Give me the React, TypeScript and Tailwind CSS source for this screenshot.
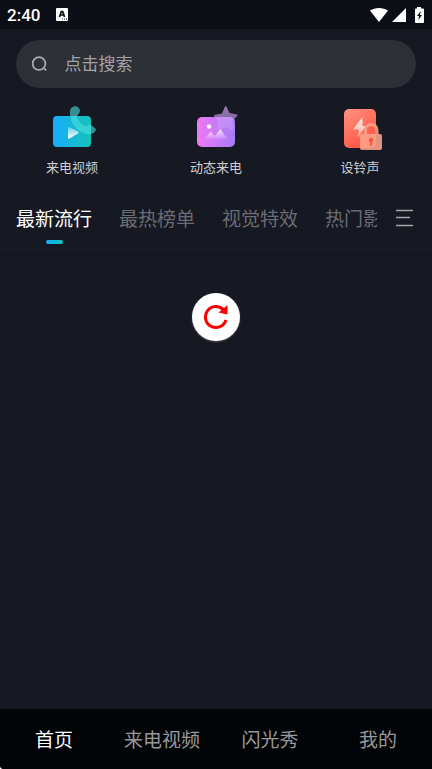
import React, { useState } from "react";

const font = "font-['Roboto','Noto_Sans_CJK_SC',sans-serif]";

function StatusBar() {
  return (
    <header className="flex h-[29px] items-center justify-between bg-[#0b0e15] px-[7px] text-white">
      <div className="flex items-center gap-4">
        <span className="text-[17px] leading-5 font-medium">2:40</span>
        <svg width="12" height="13" viewBox="0 0 12 13" aria-hidden="true">
          <rect width="12" height="13" rx="1" fill="#fff" />
          <path d="M3.500 9 5.300 3.500H6.700L8.500 9M4.500 7H7.500" fill="none" stroke="#0b0e15" strokeWidth="1.700" />
          <path d="M6 11H11" stroke="#0b0e15" strokeWidth="1" strokeDasharray="1 1" />
        </svg>
      </div>
      <div className="flex items-center gap-1">
        <svg width="18" height="16" viewBox="0 0 18 16" aria-hidden="true">
          <path d="M0 3.600C5.200 0 12.800 0 18 3.600L9 15Z" fill="#fff" />
        </svg>
        <svg width="14" height="16" viewBox="0 0 14 16" aria-hidden="true">
          <path d="M14 1V15H0Z" fill="#fff" />
        </svg>
        <svg className="ml-1" width="11" height="16" viewBox="0 0 11 16" aria-hidden="true">
          <path d="M3 0H7V1.500H9Q10 1.500 10 2.500V15Q10 16 9 16H2Q1 16 1 15V2.500Q1 1.500 2 1.500H3Z" fill="#fff" />
          <path d="M6.700 4 3 9H5L4.400 13 8 8H6Z" fill="#0b0e15" />
        </svg>
      </div>
    </header>
  );
}

function VideoIcon() {
  return (
    <svg width="48" height="48" viewBox="0 0 48 48" aria-hidden="true">
      <defs>
        <linearGradient id="video" x1="0" x2="1">
          <stop stopColor="#18adfc" />
          <stop offset="1" stopColor="#15c3b8" />
        </linearGradient>
        <linearGradient id="play" x1="0" x2="0" y1="1" y2="0">
          <stop stopColor="#fff" />
          <stop offset="1" stopColor="#fff" stopOpacity=".35" />
        </linearGradient>
      </defs>
      <rect x="5" y="12" width="38" height="31" rx="4" fill="url(#video)" />
      <path
        d="M26 2.500C29 1.500 32 4 32 7C32 9 29 11 29 13C30 17 33 20 37 22C39 22 41 20 43 21L47.500 24.500C49 27 45 30 42 30C32 30 22.500 22 22 9C22 5 23 3 26 2.500Z"
        fill="#4be0de"
        fillOpacity=".6"
      />
      <path d="M20 24Q20 22.500 21.500 23.200L30 27.500Q31.500 28.500 30 29.500L21.500 34.500Q20 35 20 33.500Z" fill="url(#play)" />
    </svg>
  );
}

function PictureIcon() {
  return (
    <svg width="48" height="48" viewBox="0 0 48 48" aria-hidden="true">
      <defs>
        <linearGradient id="picture" x1="0" x2="1">
          <stop stopColor="#ee79f4" />
          <stop offset="1" stopColor="#a67bf8" />
        </linearGradient>
        <linearGradient id="hills" x1="0" x2="0" y1="0" y2="1">
          <stop stopColor="#fff" stopOpacity=".85" />
          <stop offset="1" stopColor="#fff" stopOpacity=".1" />
        </linearGradient>
        <linearGradient id="star" x1="0" x2="0" y1="0" y2="1">
          <stop stopColor="#cda2f2" stopOpacity=".7" />
          <stop offset="1" stopColor="#c99af8" stopOpacity=".5" />
        </linearGradient>
      </defs>
      <rect x="5" y="13" width="38" height="30" rx="5" fill="url(#picture)" />
      <path
        d="M33 2.500Q33.700 1.500 34.400 2.500L37.500 9 45 10.500Q46.200 11 45.200 12L40.500 17 41.300 25.500Q41.300 27 40 26.300L33.500 23 26.500 26Q25 26.500 25.300 25L26.500 17.500 22.200 12.500Q21.500 11 23 10.800L30 9.500Z"
        fill="url(#star)"
      />
      <circle cx="17" cy="22.500" r="2.200" fill="#fff" fillOpacity=".9" />
      <path d="M13 35 18.500 27.500 22.500 32 28.500 25 35 35Z" fill="url(#hills)" />
    </svg>
  );
}

function LockIcon() {
  return (
    <svg width="48" height="48" viewBox="0 0 48 48" aria-hidden="true">
      <defs>
        <linearGradient id="ring" x1="0" x2=".6" y1="0" y2="1">
          <stop stopColor="#ff9482" />
          <stop offset="1" stopColor="#ff533f" />
        </linearGradient>
        <linearGradient id="bolt" x1="0" x2="0" y1="1" y2="0">
          <stop stopColor="#fff" stopOpacity=".4" />
          <stop offset="1" stopColor="#fff" stopOpacity=".9" />
        </linearGradient>
      </defs>
      <rect x="8" y="5" width="32" height="39" rx="5" fill="url(#ring)" />
      <path d="M26.500 13 17 25.500H23L21.500 34 30 22H26.500Z" fill="url(#bolt)" />
      <g opacity=".88">
        <path d="M29.500 31V26C29.500 18.500 41 18.500 41 26V31" fill="none" stroke="#fda58a" strokeWidth="3" />
        <rect x="24" y="30" width="22" height="16" rx="2" fill="#fda58a" />
      </g>
      <circle cx="35" cy="36" r="2.200" fill="#fa563b" />
      <path d="M35 36V41" stroke="#fa563b" strokeWidth="2" strokeLinecap="round" />
    </svg>
  );
}

const shortcuts = [
  { label: "来电视频", Icon: VideoIcon },
  { label: "动态来电", Icon: PictureIcon },
  { label: "设铃声", Icon: LockIcon },
];
const tabs = ["最新流行", "最热榜单", "视觉特效", "热门影视"];
const pages = ["首页", "来电视频", "闪光秀", "我的"];

export default function App() {
  const [tab, setTab] = useState(0);
  const [page, setPage] = useState(0);

  return (
    <div className="bg-white">
      <div className={`flex min-h-screen flex-col overflow-hidden rounded-bl-[4px] bg-[#161822] ${font}`}>
        <StatusBar />

        <form className="px-4 pt-[11px]" onSubmit={(e) => e.preventDefault()}>
          <label className="flex h-12 items-center gap-4 rounded-full bg-[#2e3038] px-4">
            <svg width="18" height="18" viewBox="0 0 18 18" fill="none" stroke="#a9aaae" strokeWidth="2" aria-hidden="true">
              <circle cx="7.700" cy="8.500" r="7" />
              <path d="M12.500 13 15.500 16" />
            </svg>
            <input
              type="search"
              aria-label="搜索"
              placeholder="点击搜索"
              className="w-full min-w-0 bg-transparent text-[17px] leading-6 text-white outline-none placeholder:text-[#a1a2a6]"
            />
          </label>
        </form>

        <section className="grid grid-cols-3 pt-4">
          {shortcuts.map(({ label, Icon }) => (
            <button key={label} type="button" className="flex flex-col items-center gap-1.5">
              <Icon />
              <span className="text-[13px] leading-5 text-[#cfcfd2]">{label}</span>
            </button>
          ))}
        </section>

        <div className="mt-7 flex items-start border-b border-[#12141c] pb-2.5 pl-4 pr-[18px]">
          <div role="tablist" className="flex min-w-0 flex-1 gap-[27px] overflow-hidden">
            {tabs.map((name, i) => (
              <button
                key={name}
                type="button"
                role="tab"
                aria-selected={tab === i}
                onClick={() => setTab(i)}
                className={`flex shrink-0 flex-col items-center gap-1.5 text-[19px] leading-7 ${tab === i ? "text-white" : "text-[#6b6c73]"}`}
              >
                {name}
                <span className={`h-1 w-[17px] rounded-full ${tab === i ? "bg-linear-to-r from-[#18adfc] to-[#15c3b8]" : ""}`} />
              </button>
            ))}
          </div>
          <button type="button" aria-label="全部分类" className="ml-[19px] flex h-6 items-center">
            <svg width="18" height="18" viewBox="0 0 18 18" stroke="#a5a6aa" strokeWidth="1.600" aria-hidden="true">
              <path d="M0 1.500H17M0 8.500H14M0 16.500H17" />
            </svg>
          </button>
        </div>

        <main className="flex flex-1 flex-col items-center pt-[38px]">
          <button
            type="button"
            aria-label="刷新"
            className="flex size-12 items-center justify-center rounded-full bg-white shadow-[0_1px_2px_#4b514c]"
          >
            <svg width="26" height="26" viewBox="0 0 26 26" aria-hidden="true">
              <path d="M23 16A10.500 10.500 0 1 1 20.400 5.600" fill="none" stroke="#fb0000" strokeWidth="3" />
              <path d="M24.500 1V10.500L15.500 8.500Z" fill="#fb0000" />
            </svg>
          </button>
        </main>

        <nav className="grid h-[60px] grid-cols-4 bg-[#030408]">
          {pages.map((name, i) => (
            <button
              key={name}
              type="button"
              aria-current={page === i ? "page" : undefined}
              onClick={() => setPage(i)}
              className={`pt-1 text-[19px] leading-7 ${page === i ? "text-white" : "text-[#98999b]"}`}
            >
              {name}
            </button>
          ))}
        </nav>
      </div>
    </div>
  );
}
